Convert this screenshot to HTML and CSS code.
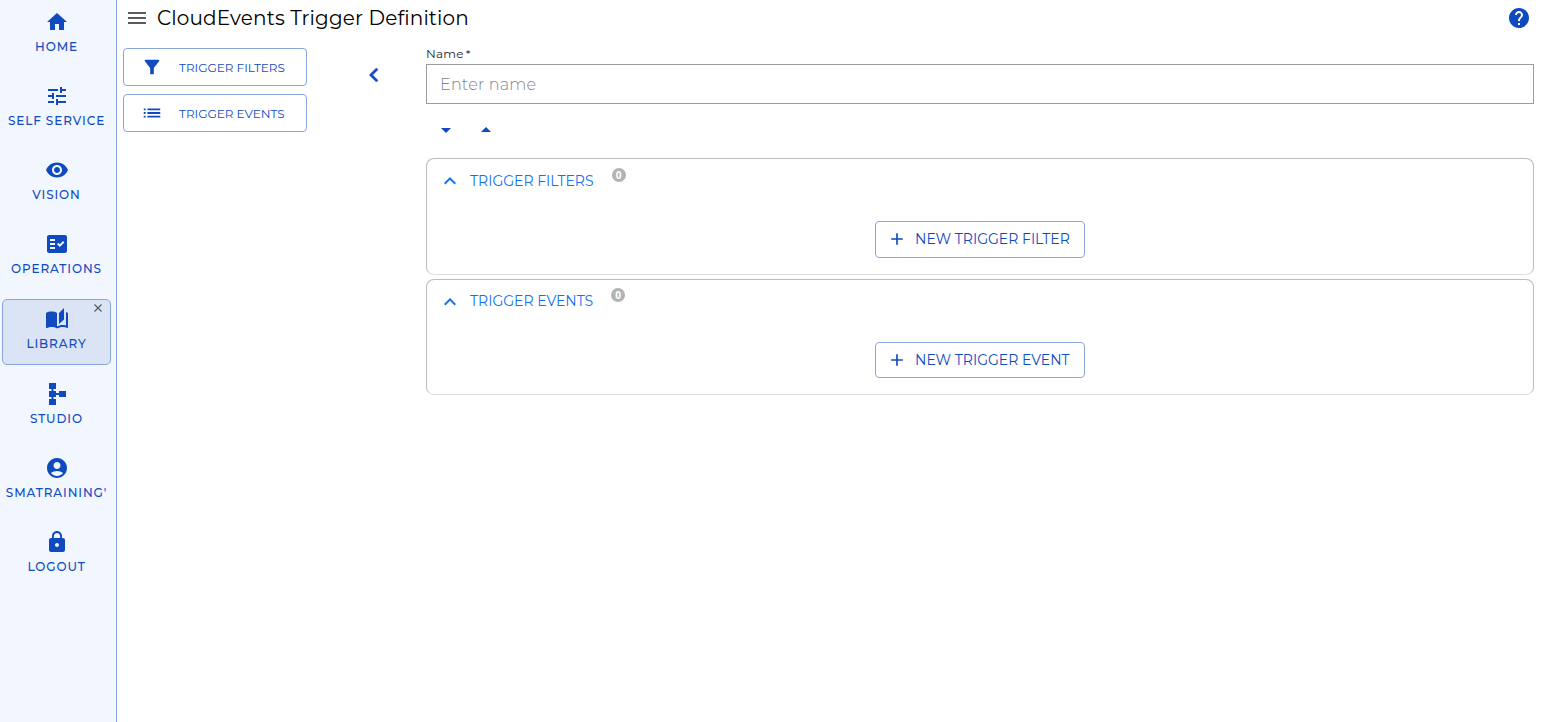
FILE: index.html
```html
<!DOCTYPE html>
<html lang="en">
<head>
  <meta charset="UTF-8">
  <title>CloudEvents Trigger Definition</title>
  <link rel="stylesheet" href="styles.css">
</head>
<body>
<nav class="sidebar">
  <a class="nav-item">
    <svg class="icon" viewBox="0 0 24 24"><path d="M10 20v-6h4v6h5v-8h3L12 3 2 12h3v8z"/></svg>
    <span class="nav-label">HOME</span>
  </a>
  <a class="nav-item">
    <svg class="icon" viewBox="0 0 24 24"><path d="M3 17v2h6v-2H3zM3 5v2h10V5H3zm10 16v-2h8v-2h-8v-2h-2v6h2zM7 9v2H3v2h4v2h2V9H7zm14 4v-2H11v2h10zm-6-4h2V7h4V5h-4V3h-2v6z"/></svg>
    <span class="nav-label">SELF SERVICE</span>
  </a>
  <a class="nav-item">
    <svg class="icon" viewBox="0 0 24 24"><path d="M12 4.5C7 4.5 2.73 7.61 1 12c1.73 4.39 6 7.5 11 7.5s9.27-3.11 11-7.5c-1.73-4.39-6-7.5-11-7.5zM12 17c-2.76 0-5-2.24-5-5s2.24-5 5-5 5 2.24 5 5-2.24 5-5 5zm0-8c-1.66 0-3 1.34-3 3s1.34 3 3 3 3-1.34 3-3-1.34-3-3-3z"/></svg>
    <span class="nav-label">VISION</span>
  </a>
  <a class="nav-item">
    <svg class="icon" viewBox="0 0 24 24"><path fill-rule="evenodd" d="M20 3H4c-1.1 0-2 .9-2 2v14c0 1.1.9 2 2 2h16c1.1 0 2-.9 2-2V5c0-1.1-.9-2-2-2zM10 17H5v-2h5v2zm0-4H5v-2h5v2zm0-4H5V7h5v2zm4.82 6L12 12.16l1.41-1.41 1.41 1.42L17.99 9l1.42 1.42L14.82 15z"/></svg>
    <span class="nav-label">OPERATIONS</span>
  </a>
  <a class="nav-item active">
    <svg class="icon" viewBox="0 0 24 24"><path d="M19 1l-5 5v11l5-4.5V1zM12 21.5V6c-1.45-1.1-3.55-1.5-5.5-1.5S2.45 4.9 1 6v14.65c0 .25.25.5.5.5.1 0 .15-.05.25-.05C3.1 20.45 5.05 20 6.5 20c1.95 0 4.05.4 5.5 1.5 1.35-.85 3.8-1.5 5.5-1.5 1.65 0 3.35.3 4.75 1.05.1.05.15.05.25.05.25 0 .5-.25.5-.5V6c-.6-.45-1.25-.75-2-1v13.5c-1.1-.35-2.3-.5-3.5-.5-1.7 0-4.15.65-5.5 1.5z"/></svg>
    <span class="nav-label">LIBRARY</span>
    <svg class="close" viewBox="0 0 10 10"><path d="M1.5 1.5l7 7M8.5 1.5l-7 7"/></svg>
  </a>
  <a class="nav-item">
    <svg class="icon" viewBox="0 0 24 24"><path d="M14 9v2h-3V9H8.5V7H11V1H4v6h2.5v2H4v6h2.5v2H4v6h7v-6H8.5v-2H11v-2h3v2h7V9h-7z"/></svg>
    <span class="nav-label">STUDIO</span>
  </a>
  <a class="nav-item">
    <svg class="icon" viewBox="0 0 24 24"><path d="M12 2C6.48 2 2 6.48 2 12s4.48 10 10 10 10-4.48 10-10S17.52 2 12 2zm0 4c1.93 0 3.5 1.57 3.5 3.5S13.93 13 12 13s-3.5-1.57-3.5-3.5S10.07 6 12 6zm0 14c-2.03 0-4.43-.82-6.14-2.88C7.55 15.8 9.68 15 12 15s4.45.8 6.14 2.12C16.43 19.18 14.03 20 12 20z"/></svg>
    <span class="nav-label">SMATRAINING'</span>
  </a>
  <a class="nav-item">
    <svg class="icon" viewBox="0 0 24 24"><path d="M18 8h-1V6c0-2.76-2.24-5-5-5S7 3.24 7 6v2H6c-1.1 0-2 .9-2 2v10c0 1.1.9 2 2 2h12c1.1 0 2-.9 2-2V10c0-1.1-.9-2-2-2zm-6 9c-1.1 0-2-.9-2-2s.9-2 2-2 2 .9 2 2-.9 2-2 2zm3.1-9H8.9V6c0-1.71 1.39-3.1 3.1-3.1 1.71 0 3.1 1.39 3.1 3.1v2z"/></svg>
    <span class="nav-label">LOGOUT</span>
  </a>
</nav>

<main class="page">
  <header class="topbar">
    <svg class="icon menu" viewBox="0 0 24 24"><path d="M3 18h18v-2H3v2zm0-5h18v-2H3v2zm0-7v2h18V6H3z"/></svg>
    <h1>CloudEvents Trigger Definition</h1>
    <svg class="icon help" viewBox="0 0 24 24"><path d="M12 2C6.48 2 2 6.48 2 12s4.48 10 10 10 10-4.48 10-10S17.52 2 12 2zm1 17h-2v-2h2v2zm2.07-7.75l-.9.92C13.45 12.9 13 13.5 13 15h-2v-.5c0-1.1.45-2.1 1.17-2.83l1.24-1.26c.37-.36.59-.86.59-1.41 0-1.1-.9-2-2-2s-2 .9-2 2H8c0-2.21 1.79-4 4-4s4 1.79 4 4c0 .88-.36 1.68-.93 2.25z"/></svg>
  </header>

  <div class="content">
    <div class="sections">
      <button class="section-btn">
        <svg viewBox="0 0 24 24"><path d="M4.25 5.61C6.27 8.2 10 13 10 13v6c0 .55.45 1 1 1h2c.55 0 1-.45 1-1v-6s3.72-4.8 5.74-7.39c.51-.66.04-1.61-.79-1.61H5.04c-.83 0-1.3.95-.79 1.61z"/></svg>
        <span>TRIGGER FILTERS</span>
      </button>
      <button class="section-btn">
        <svg viewBox="0 0 24 24"><path d="M3 13h2v-2H3v2zm0 4h2v-2H3v2zm0-8h2V7H3v2zm4 4h14v-2H7v2zm0 4h14v-2H7v2zM7 7v2h14V7H7z"/></svg>
        <span>TRIGGER EVENTS</span>
      </button>
    </div>

    <svg class="collapse" viewBox="0 0 24 24"><path d="M15.41 7.41L14 6l-6 6 6 6 1.41-1.41L10.83 12z"/></svg>

    <form class="editor">
      <label for="name">Name<span class="required">*</span></label>
      <input type="text" id="name" placeholder="Enter name">
      <div class="toggles">
        <svg class="icon" viewBox="0 0 24 24"><path d="M7 10l5 5 5-5z"/></svg>
        <svg class="icon" viewBox="0 0 24 24"><path d="M7 14l5-5 5 5z"/></svg>
      </div>

      <section class="panel">
        <div class="panel-head">
          <svg class="icon" viewBox="0 0 24 24"><path d="M12 8l-6 6 1.41 1.41L12 10.83l4.59 4.58L18 14z"/></svg>
          <h2>TRIGGER FILTERS</h2>
          <span class="count">0</span>
        </div>
        <button type="button" class="add-btn">
          <svg viewBox="0 0 24 24"><path d="M19 13h-6v6h-2v-6H5v-2h6V5h2v6h6v2z"/></svg>
          <span>NEW TRIGGER FILTER</span>
        </button>
      </section>

      <section class="panel events">
        <div class="panel-head">
          <svg class="icon" viewBox="0 0 24 24"><path d="M12 8l-6 6 1.41 1.41L12 10.83l4.59 4.58L18 14z"/></svg>
          <h2>TRIGGER EVENTS</h2>
          <span class="count">0</span>
        </div>
        <button type="button" class="add-btn">
          <svg viewBox="0 0 24 24"><path d="M19 13h-6v6h-2v-6H5v-2h6V5h2v6h6v2z"/></svg>
          <span>NEW TRIGGER EVENT</span>
        </button>
      </section>
    </form>
  </div>
</main>
</body>
</html>
```
FILE: styles.css
```css
* { box-sizing: border-box; }
body { margin: 0; display: flex; height: 722px; overflow: hidden; background: #fff; font-family: Montserrat, Inter, "Open Sans", sans-serif; color: #000; }
svg { display: block; flex: none; fill: #0f4bbf; }
.icon { width: 24px; height: 24px; }
button { font-family: inherit; background: #fff; border: 1px solid #87a5df; border-radius: 4px; color: #0f4bbf; }

/* sidebar */
.sidebar { width: 117px; flex: none; background: #f2f6ff; border-right: 1px solid #87a5df; padding: 2px 5px 0 2px; }
.nav-item { position: relative; display: flex; flex-direction: column; align-items: center; height: 66px; margin-bottom: 8px; padding-top: 8px; border-radius: 5px; }
.nav-item.active { margin: 9px 0; padding-top: 7px; background: #dbe4f4; border: 1px solid #87a5df; }
.nav-label { margin-top: 5px; font-size: 12px; line-height: 15px; font-weight: 550; letter-spacing: .9px; color: #0f4bbf; white-space: nowrap; }
.close { position: absolute; top: 2.5px; right: 7.5px; width: 10px; height: 10px; stroke: #555; stroke-width: 1.1; }

/* header */
.page { flex: 1; min-width: 0; }
.topbar { display: flex; align-items: center; height: 36px; padding: 0 10px 0 8px; }
.topbar h1 { margin: 0 auto 0 8px; font-size: 20px; line-height: 26px; font-weight: 400; letter-spacing: .14px; }
.menu { fill: #5c5c5c; }

/* left column */
.content { display: flex; padding: 0 7px 0 6px; }
.sections { display: flex; flex-direction: column; gap: 8px; width: 184px; padding-top: 12px; }
.section-btn { display: flex; align-items: center; gap: 16px; height: 38px; padding: 0 0 0 17px; font-size: 12px; }
.section-btn svg { width: 22px; height: 22px; }
.section-btn span { white-space: nowrap; }
.collapse { width: 28px; height: 28px; margin: 24.5px 50.5px 0 52.5px; stroke: #0f4bbf; stroke-width: .4; }

/* form */
.editor { flex: 1; display: flex; flex-direction: column; margin-left: -12px; padding-top: 10px; }
.editor label { font-size: 12px; line-height: 16px; height: 18px; letter-spacing: .2px; color: #1c2430; }
.required { margin-left: 2px; }
.editor input { height: 40px; padding: 0 13px; border: 1px solid #9b9b9b; background: #fff; font: 300 16px Montserrat, Inter, sans-serif; letter-spacing: .2px; }
.editor input::placeholder { color: #80868f; }
.toggles { display: flex; gap: 16px; padding: 14px 8px 0; height: 54px; }
.panel { height: 117px; margin-bottom: 4px; border: 1px solid #bbb; border-bottom-color: #ddd; border-radius: 8px; }
.panel-head { display: flex; align-items: center; height: 44px; padding-left: 11px; }
.panel-head svg { fill: #1272ee; }
.panel-head h2 { margin: 0 18px 0 8px; font-size: 14px; font-weight: 400; color: #1272ee; }
.count { width: 14px; height: 14px; margin-bottom: 12px; border-radius: 50%; background: #b3b3b3; color: #fff; font: 700 10px/14px "Open Sans", sans-serif; text-align: center; }
.add-btn { display: flex; align-items: center; gap: 8px; width: 210px; height: 37px; margin: 18px auto 0; padding: 0 0 1px 11px; font-size: 14px; white-space: nowrap; }
.add-btn svg { width: 20px; height: 20px; }
.panel.events { height: 116px; }
.events h2 { padding-bottom: 2px; }
.events .count { margin-bottom: 14px; }
.events .add-btn { height: 36px; padding-bottom: 0; }
```
